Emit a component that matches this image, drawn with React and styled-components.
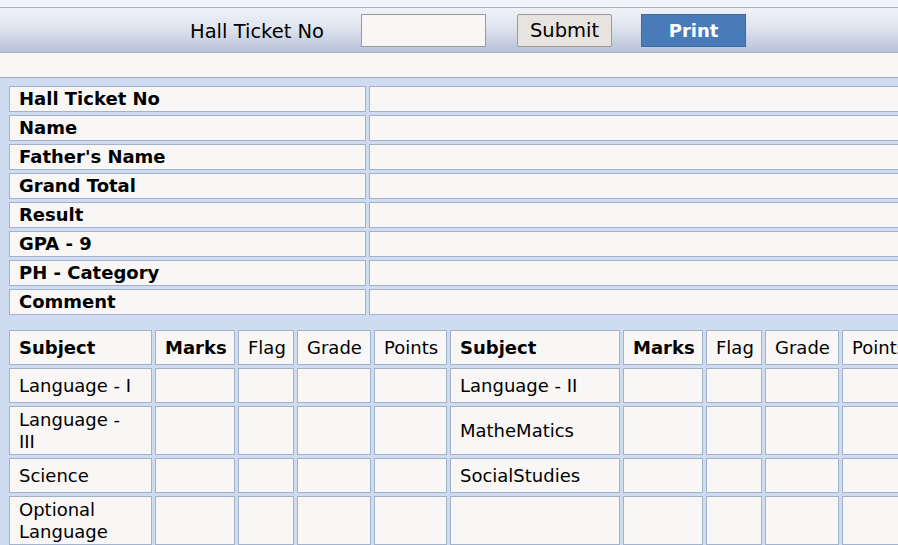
import React from "react";
import styled, { createGlobalStyle } from "styled-components";

const GlobalStyle = createGlobalStyle`
  html, body {
    margin: 0;
    padding: 0;
    background: #f8f7f5;
    overflow: hidden;
    font-family: "DejaVu Sans", Verdana, sans-serif;
    font-size: 18px;
    color: #000;
  }
`;

const Page = styled.div`
  width: 924px;
  padding-top: 7px;
  background: linear-gradient(#f1f5fa, #f1f5fa) top / 100% 7px no-repeat, #f8f7f5;
`;

const TopBar = styled.div`
  display: flex;
  align-items: center;
  height: 44px;
  padding-left: 190px;
  border-top: 1px solid #a9b1bd;
  border-bottom: 1px solid #a9b1bd;
  background: linear-gradient(#f0f2f7, #dfe4ee 45%, #b7c2d7);
`;

const BarLabel = styled.span`
  margin-right: 37px;
  padding-top: 3px;
  font-size: 19.5px;
  line-height: 22px;
`;

const TicketInput = styled.input`
  box-sizing: border-box;
  width: 125px;
  height: 33px;
  margin-right: 31px;
  border: 1px solid #9a9a9a;
  background: #f8f6f4;
  font: inherit;
`;

const Button = styled.button`
  box-sizing: border-box;
  height: 33px;
  width: ${(props) => props.width}px;
  margin-right: 29px;
  padding: 1px 0 0;
  font-family: inherit;
  font-size: ${(props) => (props.primary ? "18px" : "19.5px")};
  font-weight: ${(props) => (props.primary ? "bold" : "normal")};
  color: ${(props) => (props.primary ? "#fff" : "#000")};
  background: ${(props) => (props.primary ? "#4a7bb9" : "#e7e3de")};
  border: 1px solid ${(props) => (props.primary ? "#3c6aa4" : "#9d9a96")};
  border-radius: ${(props) => (props.primary ? "0" : "2px")};
`;

const Spacer = styled.div`
  height: 24px;
  border-bottom: 1px solid #a3abb8;
`;

const Panel = styled.div`
  background: #cedbf1;
  padding: 5px 6px 0;
`;

const Table = styled.table`
  width: 912px;
  border-collapse: separate;
  border-spacing: 3px;
  table-layout: fixed;
  margin-bottom: ${(props) => props.gap || 0}px;
`;

const Cell = styled.td`
  box-sizing: border-box;
  background: #f8f7f6;
  border: 1px solid #a2b2cb;
  padding: ${(props) =>
    props.compact ? "1px 9px" : props.wrap ? "2px 16px 2px 9px" : "2px 9px"};
  height: ${(props) => (props.compact ? 26 : 35)}px;
  line-height: ${(props) => (props.compact ? "22px" : "21.5px")};
  font-weight: ${(props) => (props.bold ? "bold" : "normal")};
  text-align: ${(props) => (props.center ? "center" : "left")};
  vertical-align: middle;
  white-space: ${(props) => (props.center ? "nowrap" : "normal")};
  overflow: hidden;
`;

const infoRows = [
  "Hall Ticket No",
  "Name",
  "Father's Name",
  "Grand Total",
  "Result",
  "GPA - 9",
  "PH - Category",
  "Comment",
];

const subjectRows = [
  ["Language - I", "Language - II"],
  ["Language - III", "MatheMatics"],
  ["Science", "SocialStudies"],
  ["Optional Language", ""],
];

const colWidths = [143, 80, 56, 74, 73, 170, 80, 56, 74, 73];

const SubjectHeader = () => (
  <>
    <Cell bold>Subject</Cell>
    <Cell bold center>Marks</Cell>
    <Cell center>Flag</Cell>
    <Cell center>Grade</Cell>
    <Cell center>Points</Cell>
  </>
);

const EmptyMarks = () => (
  <>
    <Cell />
    <Cell />
    <Cell />
    <Cell />
  </>
);

const App = () => {
  return (
    <Page>
      <GlobalStyle />
      <TopBar>
        <BarLabel>Hall Ticket No</BarLabel>
        <TicketInput type="text" />
        <Button width={95}>Submit</Button>
        <Button width={105} primary>
          Print
        </Button>
      </TopBar>
      <Spacer />
      <Panel>
        <Table gap={9}>
          <colgroup>
            <col style={{ width: 357 }} />
            <col />
          </colgroup>
          <tbody>
            {infoRows.map((label) => (
              <tr key={label}>
                <Cell compact bold>
                  {label}
                </Cell>
                <Cell compact />
              </tr>
            ))}
          </tbody>
        </Table>
        <Table>
          <colgroup>
            {colWidths.map((w, i) => (
              <col key={i} style={{ width: w }} />
            ))}
          </colgroup>
          <tbody>
            <tr>
              <SubjectHeader />
              <SubjectHeader />
            </tr>
            {subjectRows.map(([left, right]) => (
              <tr key={left}>
                <Cell wrap>{left}</Cell>
                <EmptyMarks />
                <Cell>{right}</Cell>
                <EmptyMarks />
              </tr>
            ))}
          </tbody>
        </Table>
      </Panel>
    </Page>
  );
};

export default App;
